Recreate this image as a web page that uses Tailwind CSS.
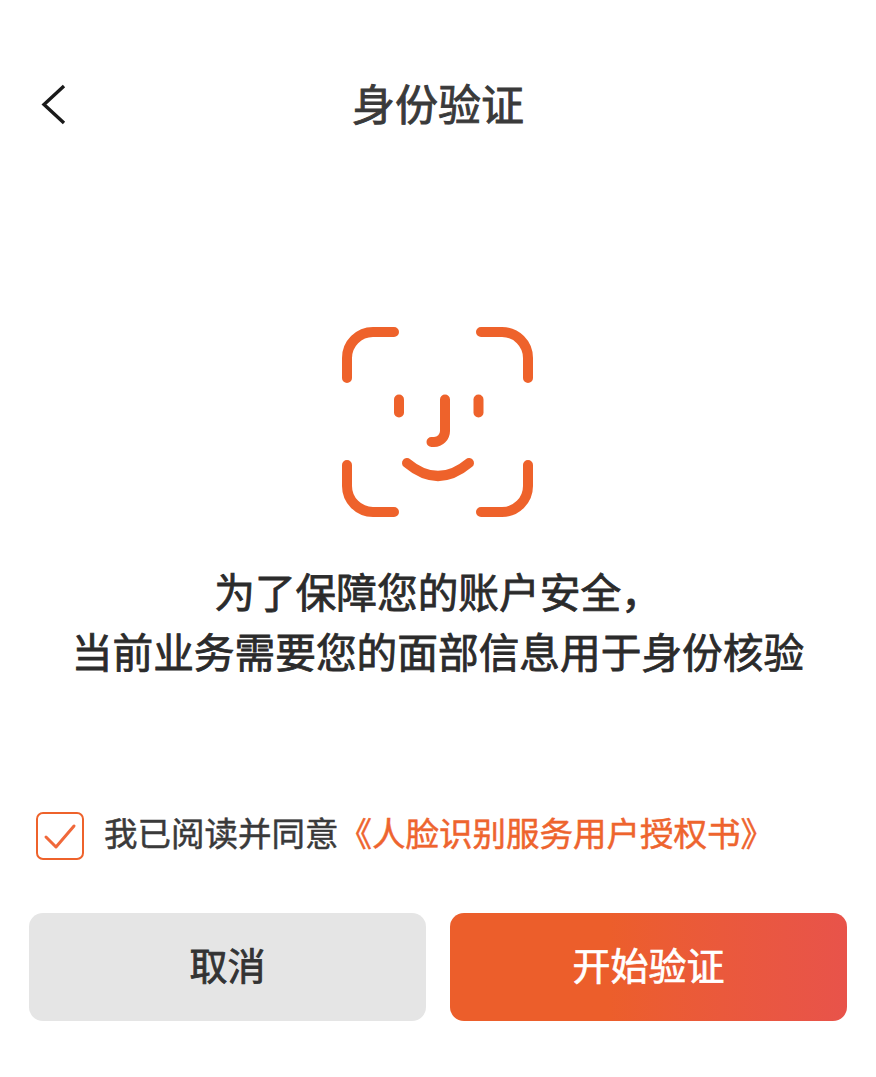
<!DOCTYPE html>
<html lang="zh-CN">
<head>
    <meta charset="UTF-8">
    <meta name="viewport" content="width=device-width, initial-scale=1.0">
    <title>身份验证</title>
    <script src="https://cdn.jsdelivr.net/npm/@tailwindcss/browser@4"></script>
</head>
<body class="bg-white font-['Noto_Sans_CJK_SC','Noto_Sans',sans-serif] text-[#333333]">
    <div class="w-[876px] h-[1077px] flex flex-col overflow-hidden">
        <!-- Header -->
        <div class="relative mt-[76px] h-[58px] flex items-center justify-center shrink-0">
            <svg class="absolute left-[38px] top-[5px] w-[32px] h-[46px]" viewBox="0 0 32 46" fill="none" stroke="#1a1a1a" stroke-width="3.400" stroke-linejoin="miter">
                <path d="M26 5 L6 23.500 L26 42"/>
            </svg>
            <h1 class="text-[43px] leading-[58px] pb-[6px] text-[#3a3a3a] [-webkit-text-stroke:0.9px_#3a3a3a]">身份验证</h1>
        </div>

        <!-- Face icon -->
        <div class="mt-[193px] flex justify-center shrink-0">
            <svg class="w-[192px] h-[192px]" viewBox="0 0 192 192" fill="none" stroke="#ee622b" stroke-linecap="round" stroke-linejoin="round">
                <g stroke-width="10">
                    <path d="M5 51 V31 A26 26 0 0 1 31 5 H52"/>
                    <path d="M139 5 H160 A26 26 0 0 1 186 31 V51"/>
                    <path d="M5 138 V159 A26 26 0 0 0 31 185 H52"/>
                    <path d="M139 185 H160 A26 26 0 0 0 186 159 V138"/>
                    <path d="M57 72.500 V85.500"/>
                    <path d="M136.500 72.500 V85.500"/>
                    <path d="M103 72.500 V104 A11 11 0 0 1 92 115 H89.500"/>
                    <path d="M65 136 Q96 162 127 136"/>
                </g>
            </svg>
        </div>

        <!-- Message -->
        <div class="mt-[42px] text-center text-[40.700px] leading-[60px] text-[#2b2b2b] [-webkit-text-stroke:0.8px_#2b2b2b]">
            <p>为了保障您的账户安全，</p>
            <p>当前业务需要您的面部信息用于身份核验</p>
        </div>

        <!-- Agreement -->
        <div class="mt-[131px] ml-[36px] flex items-center gap-[20px] h-[48px]">
            <div class="w-[48px] h-[48px] rounded-[7px] border-2 border-[#ee622b] shrink-0">
                <svg class="w-[44px] h-[44px]" viewBox="0 0 44 44" fill="none" stroke="#f0683a" stroke-width="3" stroke-linecap="round" stroke-linejoin="round">
                    <path d="M8 23 L18 33 L36 12"/>
                </svg>
            </div>
            <p class="text-[33.500px] leading-[48px] pb-[8px] whitespace-nowrap text-[#3a3a3a] [-webkit-text-stroke:0.5px_#3a3a3a]">我已阅读并同意<span class="text-[#ee642e] [-webkit-text-stroke:0.5px_#ee642e]">《人脸识别服务用户授权书》</span></p>
        </div>

        <!-- Buttons -->
        <div class="mt-[53px] mx-[29px] flex gap-[24px]">
            <button class="flex-1 h-[108px] pb-[8px] rounded-[14px] bg-[#e5e5e5] text-[38px] text-[#333333] [-webkit-text-stroke:0.8px_#333333]">取消</button>
            <button class="flex-1 h-[108px] pb-[8px] rounded-[14px] bg-linear-to-r from-[#ec5e2b] from-40% to-[#e8534a] text-[38px] text-white [-webkit-text-stroke:0.7px_#ffffff]">开始验证</button>
        </div>
    </div>
</body>
</html>
